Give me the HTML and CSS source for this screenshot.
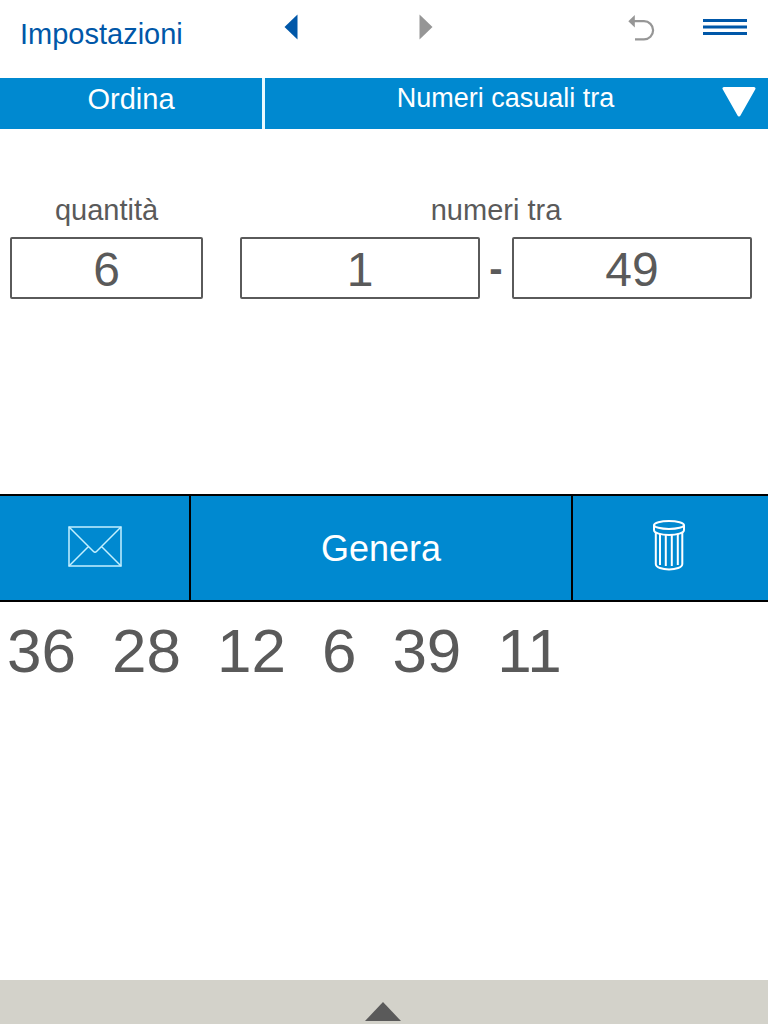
FILE: index.html
```html
<!DOCTYPE html>
<html lang="it">
<head>
    <meta charset="UTF-8">
    <meta name="viewport" content="width=device-width, initial-scale=1.0">
    <title>Numeri casuali</title>
    <link rel="stylesheet" href="styles.css">
</head>
<body>
    <header>
        <a href="#" class="impostazioni">Impostazioni</a>
        <button type="button" class="icona" aria-label="Indietro">
            <svg width="14" height="26" viewBox="0 0 14 26"><path d="M0.5 13L13.5 0.5v25z" fill="#0057a8"/></svg>
        </button>
        <button type="button" class="icona" aria-label="Avanti">
            <svg width="14" height="26" viewBox="0 0 14 26"><path d="M13.5 13L0.5 0.5v25z" fill="#969696"/></svg>
        </button>
        <div class="destra">
            <button type="button" class="icona" aria-label="Annulla">
                <svg width="27" height="28" viewBox="0 0 27 28">
                    <path d="M5 8.2h11a8.900 8.900 0 0 1 0 18.200H7" fill="none" stroke="#969696" stroke-width="2.200"/>
                    <path d="M0.300 8.200L6.800 2v12.500z" fill="#969696"/>
                </svg>
            </button>
            <button type="button" class="icona" aria-label="Menu">
                <svg width="44" height="16" viewBox="0 0 44 16"><path d="M0 1.500h44M0 8h44M0 14.500h44" stroke="#0057a8" stroke-width="2.800"/></svg>
            </button>
        </div>
    </header>

    <nav>
        <button type="button" class="ordina" onclick="ordina()">Ordina</button>
        <div class="tipo">
            <select aria-label="Tipo di generatore">
                <option>Numeri casuali tra</option>
            </select>
            <svg class="freccia" width="34" height="31" viewBox="0 0 34 31"><path d="M2 1.500h30L17 28z" fill="#fff" stroke="#fff" stroke-width="3" stroke-linejoin="round"/></svg>
        </div>
    </nav>

    <main>
        <section class="campi">
            <div class="campo">
                <label for="quantita">quantità</label>
                <input type="text" inputmode="numeric" id="quantita" value="6">
            </div>
            <div class="campo">
                <label for="minimo">numeri tra</label>
                <div class="intervallo">
                    <input type="text" inputmode="numeric" id="minimo" value="1">
                    <span class="trattino">-</span>
                    <input type="text" inputmode="numeric" id="massimo" value="49" aria-label="numero massimo">
                </div>
            </div>
        </section>

        <div class="azioni">
            <button type="button" aria-label="Invia per email">
                <svg width="54" height="41" viewBox="0 0 54 41" fill="none" stroke="#c4f0ff" stroke-width="1.500">
                    <path d="M1 1h52v39H1z"/>
                    <path d="M1 1l24.500 24.500q1.500 1.500 3 0L53 1M1 40l19.500-19.500M53 40L33.500 20.500"/>
                </svg>
            </button>
            <button type="button" class="genera" onclick="genera()">Genera</button>
            <button type="button" aria-label="Cancella" onclick="cancella()">
                <svg width="36" height="52" viewBox="0 0 36 52" fill="none" stroke="#fff" stroke-width="2">
                    <ellipse cx="16" cy="5" rx="15" ry="4"/>
                    <path d="M1 5V10c0 6.500 30 6.500 30 0V5"/>
                    <path d="M2.800 12v32c0 7.200 26.500 7.200 26.500 0V12"/>
                    <path d="M7 14v31M12.800 15v31M18.800 15v31M24.800 14v31"/>
                </svg>
            </button>
        </div>

        <div id="res">
            <span>36</span>
            <span>28</span>
            <span>12</span>
            <span>6</span>
            <span>39</span>
            <span>11</span>
        </div>
    </main>

    <footer>
        <button type="button" class="icona" aria-label="Apri">
            <svg width="38" height="19" viewBox="0 0 38 19"><path d="M18 0l18 19H0z" fill="#5a5a5a"/></svg>
        </button>
    </footer>

    <script>
        var quantita = document.getElementById('quantita');
        var minimo = document.getElementById('minimo');
        var massimo = document.getElementById('massimo');
        var res = document.getElementById('res');
        var valori = [36, 28, 12, 6, 39, 11];

        function mostra(){
            res.innerHTML = '';
            for(var i = 0; i < valori.length; i++){
                res.innerHTML += `<span>${valori[i]}</span>`;
            }
        }

        function genera(){
            var min = Number(minimo.value);
            var max = Number(massimo.value);
            var totale = Math.min(Number(quantita.value), max - min + 1);
            valori = [];
            while(valori.length < totale){
                var n = min + Math.floor(Math.random() * (max - min + 1));
                if(valori.indexOf(n) == -1){
                    valori.push(n);
                }
            }
            mostra();
        }

        function ordina(){
            valori.sort(function(a, b){ return a - b; });
            mostra();
        }

        function cancella(){
            valori = [];
            mostra();
        }
    </script>
</body>
</html>
```
FILE: styles.css
```css
*{
    margin: 0;
    box-sizing: border-box;
    font-family: "Liberation Sans", Arial, Helvetica, sans-serif;
}
body{
    background-color: white;
    color: #5a5a5a;
    min-height: 100vh;
    display: flex;
    flex-direction: column;
}
svg{
    display: block;
}
button{
    border: none;
    padding: 0;
    background: none;
    color: white;
    cursor: pointer;
}

header{
    display: grid;
    grid-template-columns: 29.2% 17.5% 17.5% 1fr;
    align-items: center;
    justify-items: center;
    height: 78px;
    padding-bottom: 24px;
}
.impostazioni{
    justify-self: start;
    padding-left: 20px;
    padding-top: 14px;
    font-size: 29px;
    color: #0057a8;
    text-decoration: none;
}
.destra{
    justify-self: end;
    display: flex;
    align-items: center;
    gap: 48px;
    padding-right: 21px;
}

nav{
    display: grid;
    grid-template-columns: 265fr 503fr;
    height: 51px;
    background-color: #0089d0;
}
.ordina{
    border-right: 3px solid #e8faff;
    padding-bottom: 8px;
    font-size: 29px;
}
.tipo{
    position: relative;
    display: flex;
}
.tipo select{
    appearance: none;
    width: 100%;
    border: none;
    padding: 0 22px 12px 0;
    background: none;
    color: white;
    font-size: 27px;
    text-align: center;
    text-align-last: center;
}
.freccia{
    position: absolute;
    top: 9px;
    right: 12px;
    pointer-events: none;
}

main{
    flex: 1;
}
.campi{
    display: grid;
    grid-template-columns: 193fr 512fr;
    column-gap: 37px;
    align-content: start;
    min-height: 365px;
    padding: 64px 16px 0 10px;
}
.campo{
    display: flex;
    flex-direction: column;
    gap: 10px;
}
label{
    font-size: 29px;
    line-height: 34px;
    text-align: center;
}
input{
    width: 100%;
    min-width: 0;
    height: 62px;
    border: 2px solid #5a5a5a;
    border-radius: 2px;
    padding: 2px 0 0;
    background-color: white;
    color: #5a5a5a;
    font-size: 48px;
    text-align: center;
}
.intervallo{
    display: flex;
    align-items: center;
}
.intervallo input{
    flex: 1;
}
.trattino{
    width: 32px;
    font-size: 40px;
    font-weight: bold;
    line-height: 40px;
    text-align: center;
}

.azioni{
    display: grid;
    grid-template-columns: 189fr 382fr 197fr;
    height: 108px;
    border-top: 2px solid black;
    border-bottom: 2px solid black;
    background-color: #0089d0;
}
.azioni button{
    display: flex;
    align-items: center;
    justify-content: center;
    padding-bottom: 4px;
}
.azioni button + button{
    border-left: 2px solid black;
}
.azioni .genera{
    padding: 2px 0 0;
    font-size: 36px;
}

#res{
    display: flex;
    flex-wrap: wrap;
    gap: 0 36px;
    padding: 13px 7px;
    font-size: 62px;
    line-height: 72px;
}

footer{
    display: flex;
    justify-content: center;
    height: 44px;
    padding-top: 19px;
    background-color: #d3d2ca;
}
```
